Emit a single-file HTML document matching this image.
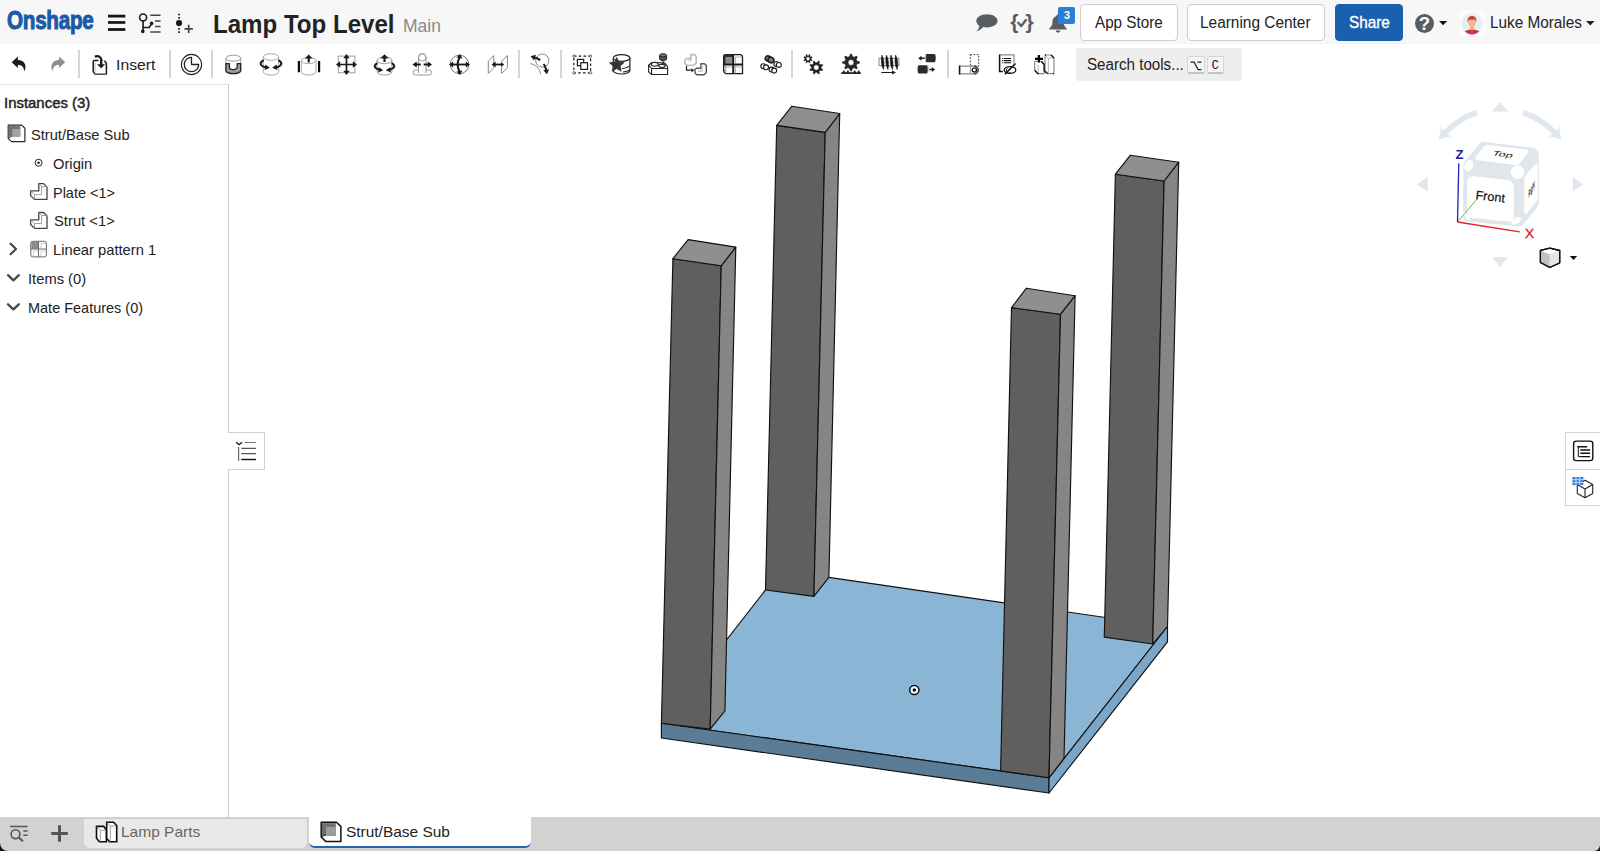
<!DOCTYPE html>
<html lang="en">
<head>
<meta charset="utf-8">
<title>Lamp Top Level | Strut/Base Sub</title>
<style>
*{box-sizing:border-box;margin:0;padding:0}
html,body{width:1600px;height:851px;overflow:hidden;background:#fff}
body{position:relative;font-family:"Liberation Sans",sans-serif;color:#222;-webkit-font-smoothing:antialiased}
.abs{position:absolute}
.t{position:absolute;white-space:pre;line-height:1}
#header{position:absolute;left:0;top:0;width:1600px;height:44px;background:#f7f7f7}
#toolbar{position:absolute;left:0;top:44px;width:1600px;height:41px;background:#fff}
#panel{position:absolute;left:0;top:84.4px;width:229px;height:732.6px;background:#fff;border-top:1.5px solid #e0e0e0;border-right:1.4px solid #c6c6c6}
#tabs{position:absolute;left:0;top:817.4px;width:1600px;height:34px;background:#d2d2d2}
#canvas{position:absolute;left:0;top:0;width:1600px;height:851px;pointer-events:none}
.sep{position:absolute;top:50px;width:2px;height:28px;background:#d6d6d6}
.btn{position:absolute;top:3.6px;height:37px;border:1px solid #cdcdcd;border-radius:4px;background:#fff}
.ico{position:absolute;overflow:visible}
</style>
</head>
<body>
<div id="header"></div>
<div id="toolbar"></div>
<div id="panel"></div>
<div id="tabs"></div>

<span class="t" style="left:6.6px;top:7.6px;font-size:25px;font-weight:700;color:#1a5aa6;-webkit-text-stroke:1px #1a5aa6;letter-spacing:-0.3px;transform:scaleX(0.825);transform-origin:0 0">Onshape</span>
<!-- hamburger -->
<svg class="ico" style="left:108px;top:12px" width="18" height="22" viewBox="0 0 18 22"><g fill="#161616"><rect x="0" y="2.7" width="17.3" height="2.8"/><rect x="0" y="9.1" width="17.3" height="2.7"/><rect x="0" y="16.1" width="17.3" height="2.8"/></g></svg>
<!-- branch list -->
<svg class="ico" style="left:137px;top:10px" width="26" height="26" viewBox="0 0 26 26"><g fill="none" stroke="#1a1a1a" stroke-width="1.6" stroke-linecap="round"><circle cx="6.1" cy="7.5" r="3.5"/><path d="M6.1 11v10"/><path d="M6.1 17.5h6.2l2.2-3.6"/></g><circle cx="5.8" cy="21.4" r="1.8" fill="#1a1a1a"/><circle cx="14.6" cy="13.4" r="1.8" fill="#1a1a1a"/><g stroke="#444" stroke-width="1.5"><path d="M13.3 5.3h10.3M18 10.9h5.6M18 16.6h5.6M13.3 22h10.3"/></g></svg>
<!-- version dot plus -->
<svg class="ico" style="left:172px;top:10px" width="24" height="26" viewBox="0 0 24 26"><g fill="#1a1a1a"><rect x="6.2" y="3.7" width="1.7" height="1.7"/><rect x="6.2" y="7" width="1.7" height="1.7"/><circle cx="7.05" cy="13.1" r="3.1"/><rect x="6.2" y="18" width="1.7" height="1.7"/><rect x="6.2" y="21.3" width="1.7" height="1.7"/></g><path d="M16.7 14.7v8.4M12.5 18.9h8.4" stroke="#3a4450" stroke-width="1.7" fill="none"/></svg>
<!-- chat -->
<svg class="ico" style="left:975px;top:12px" width="24" height="22" viewBox="0 0 24 22"><path d="M12 2.2c5.9 0 10.6 2.9 10.6 6.6s-4.7 6.6-10.600 6.600c-1.300 0-2.500-.1-3.600-.4c-1.700 1.700-3.900 3.500-6.900 4.500c1.700-1.700 2.600-3.600 2.900-5.400C2.600 12.900 1.300 11 1.300 8.800c0-3.700 4.800-6.600 10.700-6.600z" fill="#585d65"/></svg>
<!-- {check} -->
<span class="t" style="left:1010.2px;top:10.8px;font-size:21px;color:#585d65;font-weight:700">{</span>
<span class="t" style="left:1025.6px;top:10.8px;font-size:21px;color:#585d65;font-weight:700">}</span>
<svg class="ico" style="left:1014px;top:14px" width="16" height="16" viewBox="0 0 16 16"><path d="M4.200 8.800l3 3.200l4.700-5.900" fill="none" stroke="#585d65" stroke-width="2.4" stroke-linejoin="round" stroke-linecap="round"/></svg>
<!-- bell -->
<svg class="ico" style="left:1047px;top:12px" width="24" height="22" viewBox="0 0 24 22"><path d="M11 2.500c-.9 0-1.600.6-1.600 1.400c-2.700.9-4 3.200-4 6.100c0 3.300-1.100 4.800-3.100 6.400v1.200h17.400v-1.200c-2-1.600-3.100-3.100-3.100-6.400c0-2.900-1.300-5.200-4-6.100c0-.8-.7-1.400-1.600-1.400zM8.600 18.600a2.400 2.100 0 0 0 4.800 0z" fill="#585d65"/></svg>
<div class="abs" style="left:1058.3px;top:7.300px;width:16.800px;height:16.700px;background:#2b7fd2;border-radius:2px"></div>
<!-- buttons -->
<div class="btn" style="left:1080px;width:97.500px"></div>
<div class="btn" style="left:1187px;width:138px"></div>
<div class="btn" style="left:1334.700px;width:68.500px;background:#1b5faf;border-color:#1b5faf"></div>
<!-- help -->
<div class="abs" style="left:1414.700px;top:13.500px;width:19.400px;height:19.400px;border-radius:50%;background:#585d63"></div>
<span class="t" style="left:1418.700px;top:15.300px;font-size:18.500px;font-weight:700;color:#fff">?</span>
<svg class="ico" style="left:1439.300px;top:21px" width="9" height="5" viewBox="0 0 9 5"><path d="M0 0h8.200l-4.100 4.300z" fill="#111"/></svg>
<!-- avatar -->
<div class="abs" style="left:1458.700px;top:10.600px;width:27.300px;height:25.600px;background:#fcfcfc;border-radius:5px"></div>
<svg class="ico" style="left:1461px;top:12.500px" width="22" height="22" viewBox="0 0 22 22"><defs><clipPath id="avc"><circle cx="11" cy="10.700" r="10.700"/></clipPath></defs><circle cx="11" cy="10.700" r="10.700" fill="#ebeeef"/><g clip-path="url(#avc)"><path d="M2.500 22c0-4 3.500-5.600 8.500-5.600s8.500 1.600 8.500 5.600z" fill="#c8384a"/><rect x="9.300" y="12.500" width="3.400" height="4.600" fill="#f2a57e"/><ellipse cx="11" cy="9.200" rx="3.900" ry="4.800" fill="#f7b58f"/><path d="M6.600 9.400c-.6-4.300 1.600-6.300 4.400-6.300s5 2 4.400 6.300c-.5-1.800-1.200-2.900-2.200-3.200c-1.400.7-3.400.8-4.700.3c-1 .5-1.500 1.500-1.900 2.900z" fill="#c8442e"/></g></svg>
<svg class="ico" style="left:1585.600px;top:21px" width="9" height="5" viewBox="0 0 9 5"><path d="M0 0h8.600l-4.300 4.400z" fill="#222"/></svg>

<span class="t" style="left:213.29px;top:12.56px;font-size:24.85px;font-weight:700;transform:scaleX(0.9691);transform-origin:0 0;color:#222;">Lamp Top Level</span>
<span class="t" style="left:402.53px;top:18.27px;font-size:17.44px;transform:scaleX(1.0040);transform-origin:0 0;color:#8a8a8a;">Main</span>
<span class="t" style="left:1095.20px;top:15.15px;font-size:15.63px;transform:scaleX(0.9742);transform-origin:0 0;color:#222;">App Store</span>
<span class="t" style="left:1200.00px;top:14.66px;font-size:15.63px;transform:scaleX(0.9865);transform-origin:0 0;color:#222;">Learning Center</span>
<span class="t" style="left:1348.52px;top:14.61px;font-size:15.7px;transform:scaleX(0.9750);transform-origin:0 0;color:#fff;-webkit-text-stroke:0.35px #fff;">Share</span>
<span class="t" style="left:1489.50px;top:14.61px;font-size:15.7px;transform:scaleX(0.9759);transform-origin:0 0;color:#222;">Luke Morales</span>
<span class="t" style="left:1063.97px;top:9.73px;font-size:11.48px;font-weight:700;transform:scaleX(0.9391);transform-origin:0 0;color:#fff;">3</span>
<div class="sep" style="left:78px"></div>
<div class="sep" style="left:169px"></div>
<div class="sep" style="left:211px"></div>
<div class="sep" style="left:518px"></div>
<div class="sep" style="left:560px"></div>
<div class="sep" style="left:791px"></div>
<div class="sep" style="left:947px"></div>
<!-- undo / redo -->
<svg class="abs" style="left:5px;top:50px" width="70" height="30" viewBox="5 50 70 30"><path d="M11.700 62.200L17.900 56.600V59.900C23.800 60.100 27.300 64.200 24.600 71.500C24 67.200 21.600 64.900 17.900 64.700V67.900Z" fill="#1c1c1c"/><path d="M65.200 62.200L59 56.600V59.900C53.100 60.100 49.600 64.200 52.300 71.500C52.900 67.200 55.300 64.900 59 64.700V67.900Z" fill="#8f8f8f"/></svg>
<!-- insert icon -->
<svg class="ico" style="left:90px;top:52px" width="20" height="24" viewBox="0 0 20 24"><path d="M8.500 8.600H4.600c-.9 0-1.400.5-1.400 1.400v9.800l1.900 2.100h11.300V11.200l-2-2.400" fill="#fff" stroke="#1a1a1a" stroke-width="1.500" stroke-linejoin="round"/><path d="M5 11v10.500h11" fill="none" stroke="#aaa" stroke-width="0.800"/><path d="M4.800 4.600c4-1.200 6.600.600 6.900 4.600" fill="none" stroke="#1a1a1a" stroke-width="2.200"/><path d="M7 12.200h8.200l-4.100 4z" fill="#1a1a1a"/><path d="M10 8h2.300v5H10z" fill="#1a1a1a"/></svg>
<!-- search box -->
<div class="abs" style="left:1075.700px;top:48.200px;width:166.500px;height:32.600px;background:#eeeeee;border-radius:3px"></div>
<div class="abs" style="left:1187px;top:55.900px;width:18px;height:18.400px;background:#f4f4f4;border:1px solid #d6d6d6;border-bottom:2px solid #c4c4c4;border-radius:2px"></div>
<div class="abs" style="left:1206.600px;top:55.900px;width:17.300px;height:18.400px;background:#f4f4f4;border:1px solid #d6d6d6;border-bottom:2px solid #c4c4c4;border-radius:2px"></div>
<svg class="ico" style="left:1190.300px;top:60.800px" width="12" height="10" viewBox="0 0 12 10"><path d="M0.500 1.200h3.600l4 7.400h3.400M7.400 1.200h4.100" fill="none" stroke="#222" stroke-width="1.200"/></svg>
<span class="t" style="left:1211.400px;top:60px;font-size:12.500px;font-family:'Liberation Mono',monospace;color:#222">C</span>
<svg class="abs" style="left:0;top:44px" width="1600" height="41" viewBox="0 44 1600 41">
<defs>
<path id="ah" d="M0 0l-4.200-3.100v6.200z"/>
</defs>
<!-- 1 clock -->
<g fill="none" stroke="#222"><circle cx="191.500" cy="64.500" r="10.100" stroke-width="1.100"/><path d="M191.500 64.500V57.300A7.200 7.200 0 1 0 198.700 64.500z" stroke-width="1.300" stroke-linejoin="round"/></g>
<!-- 2 fastened -->
<g stroke-linejoin="round"><path d="M225.900 58.200v12.500a7.400 3 0 0 0 14.800 0V58.200" fill="#fff" stroke="#999" stroke-width="1"/><ellipse cx="233.300" cy="58.200" rx="7.400" ry="3" fill="#fff" stroke="#999" stroke-width="1"/><path d="M225.900 63.600v7.100a7.400 3 0 0 0 14.800 0V63.600h-3.500v3.300a3.800 2.600 0 0 1-7.800 0V63.600z" fill="#9a9a9a" stroke="#222" stroke-width="1.300"/></g>
<!-- 3 revolute -->
<g fill="none" stroke="#aaa" stroke-width="1"><ellipse cx="271" cy="57" rx="7.700" ry="3.300"/><path d="M263.300 57v14.800a7.700 3.300 0 0 0 15.400 0V57"/></g>
<g fill="none" stroke="#1a1a1a" stroke-width="2" stroke-linecap="round"><path d="M263 60.600c-3.500 2-3.500 5.400 3.200 6.800"/><path d="M279 60.600c3.500 2 3.500 5.400-3.200 6.800"/></g>
<path d="M269.800 67.800l-4.400-3.200l-.8 5.400z" fill="#1a1a1a"/><path d="M272.200 67.800l4.400-3.200l.8 5.400z" fill="#1a1a1a"/>
<!-- 4 slider -->
<g fill="none" stroke="#aaa" stroke-width="1"><ellipse cx="308.700" cy="60.600" rx="7.300" ry="3.100"/><path d="M301.400 60.600v11.300a7.300 3.100 0 0 0 14.600 0V60.600"/></g>
<path d="M308.700 54.400l3.900 4.200h-2.800v3.900h-2.200v-3.900h-2.800z" fill="#1a1a1a"/>
<path d="M298.900 61v11.200M319.100 61v11.200" stroke="#0a0a0a" stroke-width="2.200"/>
<!-- 5 planar -->
<rect x="338.300" y="56.100" width="16.600" height="16.600" fill="none" stroke="#a5a5a5" stroke-width="1.100"/>
<path d="M339 64.500h15M346.500 57v15" stroke="#1a1a1a" stroke-width="1.700"/>
<path d="M336 64.500l4.200-3.200v6.400zM357 64.500l-4.200-3.200v6.400zM346.500 54l-3.200 4.200h6.400zM346.500 75l-3.200-4.200h6.400z" fill="#1a1a1a"/>
<!-- 6 cylindrical -->
<g fill="none" stroke="#999" stroke-width="1"><ellipse cx="384.500" cy="60.300" rx="7.400" ry="3.400"/><path d="M377.100 60.300v11.300a7.400 3.400 0 0 0 14.800 0V60.300"/></g>
<path d="M384.500 54.300l4.100 4.300h-3v3.500h-2.200v-3.500h-3z" fill="#1a1a1a"/>
<g fill="none" stroke="#1a1a1a" stroke-width="2" stroke-linecap="round"><path d="M376.700 63.600c-3.200 2-2.700 4.900 3 6.200"/><path d="M392.300 63.600c3.200 2 2.700 4.900-3 6.200"/></g>
<path d="M383.200 70.300l-4.300-3.100l-.8 5.300z" fill="#1a1a1a"/><path d="M385.800 70.300l4.300-3.100l.8 5.300z" fill="#1a1a1a"/>
<!-- 7 pin slot -->
<g fill="#fff" stroke="#999" stroke-width="1"><rect x="413.100" y="70" width="18.400" height="5" rx="2.500"/><path d="M418.500 73V57.300a3.750 3.750 0 0 1 7.500 0V73" stroke-linejoin="round"/><circle cx="422.250" cy="57.400" r="3.750" fill="none"/></g>
<path d="M415.500 64.500h5.300M423.700 64.500h5.300" stroke="#1a1a1a" stroke-width="2"/>
<path d="M412.500 64.500l4.200-3.100v6.200zM432 64.500l-4.200-3.100v6.200z" fill="#1a1a1a"/>
<!-- 8 ball -->
<circle cx="459.500" cy="64.500" r="9.300" fill="none" stroke="#777" stroke-width="1"/>
<path d="M452 64.500h15" stroke="#1a1a1a" stroke-width="1.800"/>
<path d="M459.800 57c-2.600 4.500-2.600 10.500 0 15" fill="none" stroke="#1a1a1a" stroke-width="2"/>
<path d="M449 64.500l4.200-3.100v6.200zM470 64.500l-4.200-3.100v6.200zM460 54l-3.500 3.600l5.900 1zM460 75l-3.500-3.600l5.900-1z" fill="#1a1a1a"/>
<!-- 9 parallel -->
<g fill="none" stroke="#888" stroke-width="1" stroke-linejoin="round"><path d="M488.300 61.200l5.400-5.600v12.300l-5.400 5.500z"/><path d="M501.600 61.200l5.800-5.700v12.300l-5.800 5.600z"/></g>
<path d="M494 64.500h8" stroke="#1a1a1a" stroke-width="1.800"/>
<path d="M491.600 64.500l4-2.900v5.800zM504.200 64.500l-3-2.200v4.400z" fill="#1a1a1a"/>
<!-- 10 tangent -->
<g fill="none" stroke="#888" stroke-width="1"><circle cx="542.300" cy="60.600" r="6.600"/><path d="M530.300 63.600c5.500 1 9.500 5 10.300 10.600"/></g>
<g fill="none" stroke="#1a1a1a" stroke-width="2"><path d="M533.800 57.600c2.300.2 4.600 1.200 6.500 2.600"/><path d="M543.700 64c1.300 2 2.200 4.200 2.600 6.300"/></g>
<path d="M530.600 56.300l5.300-1.600l-1.800 5.800zM547 74.300l-3.700-4l5.800-1z" fill="#1a1a1a"/>
<!-- 11 group -->
<rect x="573.900" y="56.100" width="16.700" height="16.700" fill="none" stroke="#1a1a1a" stroke-width="1.200" stroke-dasharray="2.600 2.200"/>
<g fill="#fff" stroke="#555" stroke-width="0.900"><circle cx="573.900" cy="56.100" r="1.200"/><circle cx="590.600" cy="56.100" r="1.200"/><circle cx="573.900" cy="72.800" r="1.200"/><circle cx="590.600" cy="72.800" r="1.200"/></g>
<g fill="#fff" stroke="#1a1a1a" stroke-width="1.200"><rect x="577.400" y="59.400" width="6.300" height="6.300"/><rect x="580.800" y="62.700" width="6.700" height="6.700"/></g>
<!-- 12 mate connector star -->
<g fill="#fff" stroke="#222" stroke-width="1.200"><path d="M613.300 58v12.600a8.300 3.400 0 0 0 16.600 0V58"/><ellipse cx="621.600" cy="58" rx="8.300" ry="3.300"/></g>
<path d="M622 68.500c3.500-.3 6.500-1.300 7.900-3M623 72c3-.2 5.600-1 6.900-2.300" fill="none" stroke="#222" stroke-width="1.100"/>
<path d="M616.700 57.500l2.100 4.700l5.100.5l-3.800 3.500l1.100 5l-4.500-2.600l-4.500 2.600l1.100-5l-3.800-3.500l5.100-.5z" fill="#333" stroke="#333" stroke-width="0.800" stroke-linejoin="round"/>
<!-- 13 snap / lego -->
<g fill="#fff" stroke="#222" stroke-width="1.100" stroke-linejoin="round"><path d="M648.600 65.200l3-2.400h13l3 3.900v7.800h-16l-3-2.700z"/><path d="M651.600 68.500h16M651.600 68.500v6M651.600 68.500l-3-3.300" fill="none"/><ellipse cx="654.700" cy="64.300" rx="3.500" ry="1.900"/><ellipse cx="662" cy="65.800" rx="3.200" ry="1.700"/></g>
<g fill="#555" stroke="#222" stroke-width="1"><path d="M659.600 55.300v3.600a3.500 1.600 0 0 0 7 0v-3.600"/><ellipse cx="663.100" cy="55.300" rx="3.500" ry="1.600" fill="#777"/></g>
<path d="M663.100 60.600v3.600" stroke="#222" stroke-width="1"/><path d="M663.100 65.500l-1.600-2h3.200z" fill="#222"/>
<!-- 14 replicate -->
<path d="M690.800 54.600h3.600l1.800 1.800v6.600l-2.200 2.200h-7.400l-1.700-1.800v-3.400l1.400-1.400h4.500z" fill="#fff" stroke="#bbb" stroke-width="1.600" stroke-linejoin="round"/>
<path d="M691.500 57.500v3.300h-3.600" fill="none" stroke="#ccc" stroke-width="1"/>
<path d="M700.900 63.800h3.600l1.800 1.800v7l-2.200 2.200h-7.400l-1.700-1.800v-3.400l1.400-1.400h4.500z" fill="#fff" stroke="#555" stroke-width="1.400" stroke-linejoin="round"/>
<path d="M703 66.500l-1 1v3.600h-4" fill="none" stroke="#aaa" stroke-width="1"/>
<path d="M686.500 66v4.200h5.500" fill="none" stroke="#222" stroke-width="1.200"/><path d="M694.300 70.200l-2.800-2v4z" fill="#222"/>
<!-- 15 linear pattern -->
<path d="M725 54.600h15.800l1.700 1.600v17.500h-16.800l-2.100-2.100v-15.500z" fill="#fff" stroke="#1a1a1a" stroke-width="1.300" stroke-linejoin="round"/>
<path d="M723.600 54.600h9.600v2.600h-7.400v7.200h-2.200z" fill="#2a2a2a"/>
<rect x="725.800" y="57.200" width="7.400" height="6.600" fill="#8a8a8a"/>
<path d="M733.200 54.600v19.100M723.600 64.500h18.900" stroke="#1a1a1a" stroke-width="1.900" fill="none"/>
<path d="M735.400 57h7M735.400 57v6.400M725.800 67h6.500M725.800 67v6.600M735.400 67h7M735.400 67v6.600" stroke="#999" stroke-width="0.800" fill="none"/>
<path d="M723.600 71.600l2.100-2M733.200 66l2.200 1M723.600 66.200l2.200.8" stroke="#555" stroke-width="0.800" fill="none"/>
<!-- 16 circular pattern -->
<g stroke="#1a1a1a" stroke-width="1.150" fill="#fff">
<circle cx="763.300" cy="66.200" r="2.450"/><circle cx="766" cy="67.300" r="2.450"/>
<circle cx="776.300" cy="63.900" r="2.450"/><circle cx="778.800" cy="64.900" r="2.450"/>
<circle cx="771.500" cy="69.500" r="2.450"/><circle cx="774.200" cy="70.600" r="2.450"/>
<g fill="#7a7a7a" stroke-width="1.500"><ellipse cx="768.200" cy="58.600" rx="3" ry="2.700" transform="rotate(30 768.200 58.600)"/><ellipse cx="770.900" cy="60" rx="3" ry="2.700" transform="rotate(30 770.900 60)"/></g>
</g>
<!-- 17 gear relation -->
<path d="M811.05 59.29L812.18 60.11L811.92 60.75L810.54 60.52L809.77 61.29L810.00 62.67L809.36 62.93L808.54 61.80L807.46 61.80L806.64 62.93L806.00 62.67L806.23 61.29L805.46 60.52L804.08 60.75L803.82 60.11L804.95 59.29L804.95 58.21L803.82 57.39L804.08 56.75L805.46 56.98L806.23 56.21L806.00 54.83L806.64 54.57L807.46 55.70L808.54 55.70L809.36 54.57L810.00 54.83L809.77 56.21L810.54 56.98L811.92 56.75L812.18 57.39L811.05 58.21ZM809.90 58.75A1.9 1.9 0 1 0 806.10 58.75A1.9 1.9 0 1 0 809.90 58.75Z" fill="#1e1e1e" fill-rule="evenodd" stroke="#1e1e1e" stroke-width="0.5" stroke-linejoin="round"/>
<path d="M821.03 68.34L822.77 69.60L822.36 70.59L820.24 70.24L819.04 71.44L819.39 73.56L818.40 73.97L817.14 72.23L815.46 72.23L814.20 73.97L813.21 73.56L813.56 71.44L812.36 70.24L810.24 70.59L809.83 69.60L811.57 68.34L811.57 66.66L809.83 65.40L810.24 64.41L812.36 64.76L813.56 63.56L813.21 61.44L814.20 61.03L815.46 62.77L817.14 62.77L818.40 61.03L819.39 61.44L819.04 63.56L820.24 64.76L822.36 64.41L822.77 65.40L821.03 66.66ZM819.00 67.50A2.7 2.7 0 1 0 813.60 67.50A2.7 2.7 0 1 0 819.00 67.50Z" fill="#1e1e1e" fill-rule="evenodd" stroke="#1e1e1e" stroke-width="0.6" stroke-linejoin="round"/>
<!-- 18 rack and pinion -->
<path d="M852.31 68.46L851.72 70.87L850.28 70.87L849.69 68.46L847.71 67.64L845.59 68.93L844.57 67.91L845.86 65.79L845.04 63.81L842.63 63.22L842.63 61.78L845.04 61.19L845.86 59.21L844.57 57.09L845.59 56.07L847.71 57.36L849.69 56.54L850.28 54.13L851.72 54.13L852.31 56.54L854.29 57.36L856.41 56.07L857.43 57.09L856.14 59.21L856.96 61.19L859.37 61.78L859.37 63.22L856.96 63.81L856.14 65.79L857.43 67.91L856.41 68.93L854.29 67.64ZM854.00 62.50A3.0 3.0 0 1 0 848.00 62.50A3.0 3.0 0 1 0 854.00 62.50Z" fill="#262626" fill-rule="evenodd" stroke="#262626" stroke-width="0.7" stroke-linejoin="round"/>
<path d="M841.2 72.300h19.600v1.800h-19.600zM842.300 72.400l1.600-2.300l1.600 2.300zM846.300 72.400l1.600-2.300l1.600 2.300zM853.100 72.400l1.600-2.300l1.600 2.300zM857.100 72.400l1.600-2.300l1.600 2.300z" fill="#262626"/>
<!-- 19 screw -->
<rect x="879" y="58.300" width="19.900" height="7.300" fill="#fff" stroke="#888" stroke-width="1"/>
<path d="M881.9 55C884.2 59 884.5 65 883.5 69.600C881.0 65.500 880.9 60 881.9 55zM886.4 55C888.7 59 889.0 65 888.0 69.600C885.5 65.500 885.4 60 886.4 55zM890.9 55C893.2 59 893.5 65 892.5 69.600C890.0 65.500 889.9 60 890.9 55zM895.6 55C897.9 59 898.2 65 897.2 69.600C894.7 65.500 894.6 60 895.6 55z" fill="#161616" stroke="#161616" stroke-width="0.500"/>
<path d="M881.300 72.500h11.500" stroke="#1a1a1a" stroke-width="1.100"/><path d="M896 72.500l-4-1.900v3.800z" fill="#1a1a1a"/>
<!-- 20 linear relation -->
<g fill="#2b2b2b"><path d="M926.700 54.100h7.700a1.300 4.100 0 0 1 0 8.200h-7.700a1.300 4.100 0 0 1 0-8.200z"/><path d="M918.900 65.300h7.700a1.300 4.100 0 0 1 0 8.200h-7.700a1.300 4.100 0 0 1 0-8.200z"/></g>
<path d="M920.300 58.250h4.500M929.300 69.500h3.700" stroke="#1a1a1a" stroke-width="1.400"/>
<path d="M918.200 58.250l3.300-2.500v5zM935.100 69.500l-3.300-2.500v5z" fill="#1a1a1a"/>
<path d="M925.600 55.200v6M928.200 66.400v6" stroke="#bbb" stroke-width="1"/>
<!-- 21 named position -->
<rect x="970.300" y="54.600" width="8.400" height="11.400" fill="none" stroke="#333" stroke-width="1" stroke-dasharray="1.700 1.500"/>
<path d="M959.500 66.100h14.800a3.900 3.900 0 0 1 0 7.800h-14.800z" fill="#fff" stroke="#8a8a8a" stroke-width="1.200" stroke-linejoin="round"/>
<path d="M974.300 66.100a3.900 3.900 0 0 1 0 7.800" fill="none" stroke="#333" stroke-width="1.200"/>
<path d="M959.600 65.600v8.800" stroke="#111" stroke-width="1.500"/>
<path d="M970.400 66.400v7.200" stroke="#888" stroke-width="0.900"/>
<circle cx="974.350" cy="70" r="2.100" fill="#fff" stroke="#111" stroke-width="1.300"/>
<!-- 22 display states -->
<path d="M999.500 54.900h14.500v8.300" fill="none" stroke="#8a8a8a" stroke-width="1.200"/>
<path d="M1002.800 71.600h-3.200V54.400" fill="none" stroke="#111" stroke-width="1.500"/>
<path d="M1001.900 58.500h.9M1003.700 58.500h7.400M1001.900 60.600h.9M1003.700 60.600h7.400M1001.900 62.700h.9M1003.700 62.700h7.400" stroke="#111" stroke-width="1.100"/>
<ellipse cx="1010" cy="70" rx="5.800" ry="3.400" fill="#fff" stroke="#111" stroke-width="1.300"/><path d="M1007.500 68.200a2.600 2.600 0 0 0 3 4.500" fill="none" stroke="#111" stroke-width="1"/>
<path d="M1005 74.100l10.500-10.600" stroke="#111" stroke-width="1.500"/>
<!-- 23 create part studio in context -->
<g fill="#fff" stroke="#8a8a8a" stroke-width="1.200" stroke-linejoin="round"><path d="M1034.700 61.500h6.800l2.700 3v9.100h-6.400l-3.100-3.400z"/><path d="M1038.200 65v8.600" fill="none" stroke="#aaa" stroke-width="0.900"/><path d="M1045 55h6l3 2.900v15.700h-6.400l-2.600-3z"/><path d="M1045 55l3.300 3.200v15.400M1048.300 58.200h5.700" fill="none" stroke="#aaa" stroke-width="0.900"/></g>
<path d="M1041.500 61.500l2.700 3v6.500l3.400 2.600M1034.700 70.200l3.100 3.400h1M1051 55l3 2.900M1045 55h1M1053 73.600h1" fill="none" stroke="#111" stroke-width="1.300" stroke-linejoin="round"/>
<path d="M1038.900 55v7.500M1035 58.900h8" stroke="#000" stroke-width="2.300"/>
</svg>

<span class="t" style="left:115.52px;top:56.83px;font-size:15.26px;transform:scaleX(1.0331);transform-origin:0 0;color:#222;">Insert</span>
<span class="t" style="left:1086.73px;top:56.67px;font-size:15.63px;transform:scaleX(0.9693);transform-origin:0 0;color:#222;">Search tools...</span>
<svg class="abs" style="left:0;top:85px" width="228" height="260" viewBox="0 85 228 260">
<!-- assembly icon -->
<g stroke-linejoin="round"><path d="M8.200 125.100h13.400l3.300 3.100v13.400H11.500l-3.300-3.300z" fill="#fff" stroke="#2a2a2a" stroke-width="1.200"/><path d="M8.800 125.700h11.500v10.900H8.800z" fill="#747474"/><path d="M12.300 129h8v7.600h-8z" fill="#a2a2a2"/><path d="M8.200 138.200l3.500-2" fill="none" stroke="#2a2a2a" stroke-width="0.900"/></g>
<!-- origin -->
<circle cx="38.600" cy="162.750" r="3.500" fill="#fff" stroke="#222" stroke-width="1"/><circle cx="38.600" cy="162.750" r="1.300" fill="#222"/>
<!-- part icons -->
<g id="particon" stroke-linejoin="round"><path d="M38.800 183.600h4.800l3.400 3.500v12.300H34.500l-3.900-3.800v-4.700h8.200z" fill="#fff" stroke="#444" stroke-width="1.300"/><path d="M38.800 183.600l2.800 3v8h-7M30.600 191l3.900 3.600v4.800M41.600 186.600h5" fill="none" stroke="#999" stroke-width="0.900"/></g>
<use href="#particon" y="28.900"/>
<!-- chevrons -->
<g fill="none" stroke="#4a4a4a" stroke-width="2.3" stroke-linecap="round" stroke-linejoin="round"><path d="M10.600 243.700l5.400 5.300l-5.400 5.300"/><path d="M8 275.200l5.400 5.100l5.400-5.100"/><path d="M8 304.300l5.400 5.100l5.400-5.100"/></g>
<!-- linear pattern icon -->
<g stroke="#666" stroke-width="1" fill="#fff" stroke-linejoin="round"><rect x="30.800" y="241.300" width="15.600" height="15.600" rx="2"/><path d="M31.300 241.800h7v6.900h-7z" fill="#8c8c8c" stroke="none"/><path d="M38.500 241.300v15.600M30.800 249h15.600" fill="none"/><path d="M33.300 251v5.500M41 243.500v5M41 251v5.500M33 251h5M41 251h5M41 243.500h5" fill="none" stroke="#bbb" stroke-width="0.700"/></g>
</svg>

<span class="t" style="left:4.43px;top:94.76px;font-size:15.41px;transform:scaleX(0.9693);transform-origin:0 0;color:#222;-webkit-text-stroke:0.45px #222;">Instances (3)</span>
<span class="t" style="left:31.44px;top:126.86px;font-size:15.41px;transform:scaleX(0.9508);transform-origin:0 0;color:#222;">Strut/Base Sub</span>
<span class="t" style="left:53.11px;top:155.76px;font-size:15.41px;transform:scaleX(0.9565);transform-origin:0 0;color:#222;">Origin</span>
<span class="t" style="left:53.47px;top:184.56px;font-size:15.41px;transform:scaleX(0.9393);transform-origin:0 0;color:#222;">Plate &lt;1&gt;</span>
<span class="t" style="left:53.74px;top:213.46px;font-size:15.41px;transform:scaleX(0.9593);transform-origin:0 0;color:#222;">Strut &lt;1&gt;</span>
<span class="t" style="left:53.45px;top:242.36px;font-size:15.41px;transform:scaleX(0.9556);transform-origin:0 0;color:#222;">Linear pattern 1</span>
<span class="t" style="left:27.65px;top:271.16px;font-size:15.41px;transform:scaleX(0.9560);transform-origin:0 0;color:#222;">Items (0)</span>
<span class="t" style="left:27.67px;top:299.96px;font-size:15.41px;transform:scaleX(0.9397);transform-origin:0 0;color:#222;">Mate Features (0)</span>
<div class="abs" style="left:0;top:817.500px;width:1600px;height:1.800px;background:#cecece"></div>
<div class="abs" style="left:84.400px;top:818.600px;width:222.600px;height:29.600px;background:#e9e9e9;border-radius:0 0 6px 6px"></div>
<div class="abs" style="left:309px;top:815px;width:222px;height:33px;background:#fff;border-radius:0 0 6px 6px;border-bottom:2px solid #2a62b8"></div>
<svg class="abs" style="left:0;top:817px" width="600" height="34" viewBox="0 817 600 34">
<!-- search tabs -->
<g fill="none" stroke="#555" stroke-width="1.600"><path d="M10.200 826.500h17.400M23.300 831h4.300M23.300 835.200h4.300"/><circle cx="15.500" cy="834.200" r="4.400"/><path d="M18.700 837.400l4.300 3.900" stroke-width="2"/></g>
<!-- plus -->
<path d="M59.500 825.300v16.400M51.200 833.500h16.600" stroke="#555" stroke-width="3" fill="none"/>
<!-- part studio icon -->
<g fill="#fff" stroke="#0d0d0d" stroke-width="1.600" stroke-linejoin="miter"><path d="M96.500 826.400h7.200l2.700 3.500v11.900h-7l-2.900-3.500z"/><path d="M106.700 822.300h6.800l3.200 3.200v16.300h-7.100l-2.900-3.300z"/></g>
<path d="M96.700 826.600l3.600 3.700v11.300M100.300 830.300h5.800M106.900 822.500l3.400 3.500v15.600M110.300 826h6" stroke="#888" stroke-width="0.800" fill="none"/>
<!-- assembly tab icon -->
<g stroke-linejoin="round"><path d="M321.200 822.300h15.200l4.500 4.100v15h-15.200l-4.500-4.400z" fill="#fff" stroke="#111" stroke-width="1.500"/><path d="M322 823.100h13.800v12.700H322z" fill="#6f6f6f"/><path d="M326 826.800h9.800v9h-9.800z" fill="#9c9c9c"/><path d="M321.200 837l4.500-2.400" fill="none" stroke="#111" stroke-width="1"/></g>
</svg>
<!-- window corner -->
<svg class="abs" style="left:1594px;top:845px" width="6" height="6" viewBox="0 0 6 6"><path d="M6 0v6h-6a6 6 0 0 0 6-6z" fill="#111"/></svg>
<svg class="abs" style="left:0;top:843px" width="8" height="8" viewBox="0 0 8 8"><path d="M0 0v8h8a8 8 0 0 1-8-8z" fill="#111"/></svg>

<span class="t" style="left:121.19px;top:824.24px;font-size:15.55px;transform:scaleX(0.9973);transform-origin:0 0;color:#666;">Lamp Parts</span>
<span class="t" style="left:346.12px;top:824.24px;font-size:15.55px;transform:scaleX(0.9935);transform-origin:0 0;color:#222;">Strut/Base Sub</span>
<svg id="canvas" viewBox="0 0 1600 851">
<g stroke="#111" stroke-width="1.15" stroke-linejoin="round">
<!-- plate -->
<polygon points="661.4,723.3 780.8,570.4 1167.5,626.5 1049,777.8" fill="#8ab5d5"/>
<polygon points="661.4,723.3 1049,777.8 1049,793 661.4,738" fill="#5a7c96"/>
<polygon points="1049,777.8 1167.5,626.5 1167.5,641.9 1049,793" fill="#7ba6c7"/>
<!-- strut 2 (back-left) -->
<polygon points="776.7,125.4 825.2,132.4 813.9,596.4 765.5,590" fill="#5f5f5f"/>
<polygon points="825.2,132.4 839.7,113.5 828.9,577.3 813.9,596.4" fill="#858585"/>
<polygon points="776.7,125.4 791.7,106.3 839.7,113.5 825.2,132.4" fill="#8f8f8f"/>
<!-- strut 4 (back-right) -->
<polygon points="1115.4,174.2 1164.1,181 1152.7,644 1104.3,637.1" fill="#5f5f5f"/>
<polygon points="1164.1,181 1178.7,162.2 1167.5,626.5 1152.7,644" fill="#858585"/>
<polygon points="1115.4,174.2 1130.4,155.2 1178.7,162.2 1164.1,181" fill="#8f8f8f"/>
<!-- strut 1 (front-left) -->
<polygon points="672.9,258.7 721.2,265.8 710.2,729.1 661.4,723.3" fill="#5f5f5f"/>
<polygon points="721.2,265.8 735.8,247.1 724.9,710.8 710.2,729.1" fill="#858585"/>
<polygon points="672.9,258.7 688.1,239.6 735.8,247.1 721.2,265.8" fill="#8f8f8f"/>
<!-- strut 3 (front-right) -->
<polygon points="1011.5,307.6 1060.5,314.2 1049,777.8 1000.6,770.9" fill="#5f5f5f"/>
<polygon points="1060.5,314.2 1075.1,295.7 1064,758.4 1049,777.8" fill="#858585"/>
<polygon points="1011.5,307.6 1026.4,288.2 1075.1,295.7 1060.5,314.2" fill="#8f8f8f"/>
</g>
<!-- origin -->
<circle cx="914.300" cy="690" r="4.600" fill="#fff" stroke="#06121e" stroke-width="1.500"/>
<circle cx="914.300" cy="690" r="1.750" fill="#0a0a0a"/>
</svg>

<svg class="abs" style="left:1400px;top:90px;pointer-events:none" width="200" height="200" viewBox="1400 90 200 200">
<g fill="#e0e7ee"><path d="M1499.900 101.900l8.400 9.700h-16.300z"/><path d="M1499.900 267.300l7.900-10.200h-15.400z"/><path d="M1417 184.200l10.800-7.500v15.100z"/><path d="M1582.800 184.200l-10.100-7.500v15.100z"/></g>
<path d="M1476.8 112.7A75 75 0 0 0 1445.6 132.4" fill="none" stroke="#e0e7ee" stroke-width="5.6"/><path d="M1441.0 127.0L1450.7 136.4L1438.9 139.6z" fill="#e0e7ee"/><path d="M1523.2 112.7A75 75 0 0 1 1554.4 132.4" fill="none" stroke="#e0e7ee" stroke-width="5.6"/><path d="M1559.0 127.0L1549.3 136.4L1561.1 139.6z" fill="#e0e7ee"/>
<!-- cube body -->
<path d="M1463.400 164.500c.5-2 1.600-3.500 3-5l12.500-15c1.500-1.800 3-2.700 5.500-2.400l47.500 5.500c4 .5 7 3 7 7.500v47c0 2.500-.8 4-2.200 5.800l-13 16c-1.700 2-3.500 2.800-6 2.500l-49-5c-3.500-.4-5.600-2.500-5.600-6z" fill="#dfe6ec"/>
<!-- top face -->
<path d="M1478.500 160.300c-3-.4-3.800-2-2-4.300l7.300-9c1.300-1.600 2.600-2.100 4.600-1.900l37 4.500c3 .4 3.700 1.800 2 4l-7.200 9.500c-1.300 1.700-2.800 2.200-5 2z" fill="#fff"/>
<!-- front face -->
<path d="M1467 182.500c0-4.300 2.300-6.600 6.600-6.200l33.500 3.600c4.300.5 6.600 3 6.600 7.300v28.300c0 4.300-2.300 6.400-6.600 6l-33.500-3.400c-4.300-.4-6.600-3-6.600-7.300z" fill="#fff"/>
<!-- right face -->
<path d="M1524.300 180.500c0-2.600.7-4.400 2.300-6.300l8-9.500c1.800-2.100 3.200-1.600 3.200 1.100v30.500c0 2.600-.7 4.400-2.300 6.300l-8 10c-1.800 2.200-3.200 1.600-3.200-1.100z" fill="#fff"/>
<path d="M1514.500 202.500l10 1.300" stroke="#dfe6ec" stroke-width="2.200"/>
<!-- corners -->
<circle cx="1517.500" cy="172.200" r="6.800" fill="#fff"/>
<ellipse cx="1468.700" cy="165.500" rx="4.300" ry="5.800" fill="#fff" transform="rotate(25 1468.700 165.500)"/>
<ellipse cx="1516" cy="220.800" rx="5.500" ry="3" fill="#fff" transform="rotate(-30 1516 220.800)"/>
<path d="M1463.800 212l5.500 8" stroke="#fff" stroke-width="2.500"/>
<!-- axes -->
<path d="M1457.500 222l19.700-23.200" stroke="#4cae4c" stroke-width="0.900"/>
<path d="M1458.800 163.300l-1.300 58.700" stroke="#2222b4" stroke-width="1.300"/>
<path d="M1457.500 222l62.300 9.800" stroke="#e0202c" stroke-width="1.300"/>
<text x="1455.400" y="159.200" font-family="Liberation Sans, sans-serif" font-weight="700" font-size="13.200" fill="#1c1cae">Z</text>
<text x="1525" y="238.200" font-family="Liberation Sans, sans-serif" font-weight="400" font-size="13.600" fill="#d5202c" stroke="#d5202c" stroke-width="0.400">X</text>
<text transform="translate(1475.200 199.200) rotate(6.600)" font-family="Liberation Sans, sans-serif" font-size="12.600" fill="#111" stroke="#111" stroke-width="0.200">Front</text>
<text transform="matrix(1.080 0.140 -0.330 0.560 1491.600 155.200)" font-family="Liberation Sans, sans-serif" font-size="11.500" fill="#111">Top</text>
<text transform="matrix(0.240 -0.450 0 0.900 1528.600 198.200)" font-family="Liberation Sans, sans-serif" font-size="11" fill="#111" stroke="#111" stroke-width="0.300">Right</text>
<!-- view dropdown -->
<g stroke="#111" stroke-width="1.300" stroke-linejoin="round"><path d="M1549.800 248.200l9.900 2.300v12.300l-9.900 4.600l-9.400-5v-12z" fill="#fff"/><path d="M1540.400 250.400l9.400 3.800v13.200l-9.400-5z" fill="#c2c2c2" stroke="none"/><path d="M1559.700 250.500l-9.900 3.700v13.200l9.900-4.600z" fill="#e6e6e6" stroke="none"/><path d="M1549.800 248.200l9.900 2.300v12.300l-9.900 4.600l-9.400-5v-12z" fill="none"/></g>
<path d="M1569.800 256h7.400l-3.700 3.900z" fill="#111"/>
</svg>

<!-- left toggle -->
<div class="abs" style="left:228px;top:432px;width:36.500px;height:38px;background:#fff;border:1.500px solid #d0d0d0;border-left:none"></div>
<svg class="abs" style="left:228px;top:432px" width="40" height="40" viewBox="228 432 40 40"><path d="M236.200 442.200l2.900 2.500l2.900-2.500" fill="none" stroke="#111" stroke-width="1.300"/><path d="M238.600 447v14" stroke="#666" stroke-width="1.200"/><path d="M244.800 442.500h11.200" stroke="#777" stroke-width="1.100"/><path d="M241.300 448.400h14.700M241.300 453.700h14.700" stroke="#555" stroke-width="1.200"/><path d="M241.300 459.500h14.700" stroke="#111" stroke-width="1.400"/></svg>
<!-- right panel -->
<div class="abs" style="left:1564.500px;top:431.700px;width:40px;height:74.800px;background:#fff;border:1.500px solid #d4d4d4"></div>
<div class="abs" style="left:1565px;top:468.500px;width:35px;height:1.500px;background:#d4d4d4"></div>
<svg class="abs" style="left:1565px;top:433px" width="35" height="72" viewBox="1565 433 35 72">
<rect x="1573.600" y="441.100" width="19.200" height="19.500" rx="2.600" fill="#fff" stroke="#111" stroke-width="1.400"/>
<path d="M1577.300 446.700h9.800M1580.300 450h9.800M1580.300 453.300h9.800M1580.300 456.600h9.800" stroke="#111" stroke-width="1.400"/><path d="M1578.300 446.700v9.900h2" fill="none" stroke="#111" stroke-width="1"/>
<g fill="#fff" stroke="#222" stroke-width="1.100" stroke-linejoin="round"><path d="M1585 480.200l7.700 4.300v9l-7.700 4.300l-7.700-4.300v-9z"/><path d="M1577.300 484.500l7.700 4.500l7.700-4.500M1585 489v8.800" fill="none"/></g>
<rect x="1572.400" y="477" width="10.900" height="8.200" fill="#3d7fd6"/>
<path d="M1572.400 479.700h10.900M1572.400 482.400h10.900M1576 477v8.200M1579.700 477v8.200" stroke="#cfe0f6" stroke-width="0.900"/>
</svg>


</body>
</html>
